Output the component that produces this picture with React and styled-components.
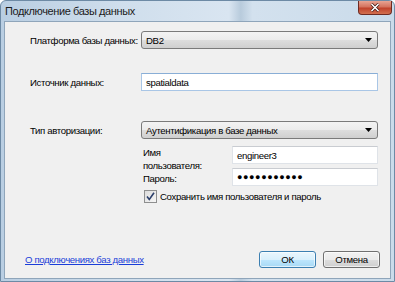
import React from 'react'
import styled, { createGlobalStyle } from 'styled-components'

const Global = createGlobalStyle`
  html, body { margin: 0; padding: 0; }
  body {
    width: 395px;
    height: 282px;
    overflow: hidden;
    font-family: "Liberation Sans", Arial, sans-serif;
    font-size: 9.6px;
    letter-spacing: -0.35px;
    color: #000;
  }
`

const Frame = styled.div`
  width: 395px;
  height: 282px;
  box-sizing: border-box;
  display: flex;
  flex-direction: column;
  background: linear-gradient(90deg, #b9cee2 0%, #cfdeec 30%, #d9e5f1 58%, #b8cbdc 61%, #d3e1ee 64%, #cadbea 100%);
  border: 1px solid #6d8aa5;
  border-radius: 6px 6px 0 0;
`

const TitleBar = styled.div`
  height: 20px;
  display: flex;
  align-items: flex-start;
  justify-content: space-between;
  padding-left: 4px;
`

const Title = styled.div`
  padding-top: 4px;
  font-size: 11px;
  letter-spacing: -0.4px;
  color: #1b1b1b;
`

const CloseButton = styled.div`
  width: 34px;
  height: 14px;
  margin-right: 2px;
  box-sizing: border-box;
  border: 1px solid #6e2b22;
  border-top: none;
  border-radius: 0 0 4px 4px;
  background: linear-gradient(180deg, #e8a493 0%, #d4735e 45%, #c0432c 55%, #d2704f 100%);
  display: flex;
  align-items: center;
  justify-content: center;
`

const Panel = styled.div`
  flex: 1;
  margin: 0 3px 2px 3px;
  background: #f0f0f0;
  border: 1px solid #8fa5ba;
  display: flex;
  flex-direction: column;
  padding: 9px 12px 10px 20px;
`

const Row = styled.div`
  display: flex;
  align-items: center;
  height: 18px;
  padding-left: 5px;
  margin-top: ${p => p.gap || 0}px;
`

const Label = styled.div`
  width: 111px;
  flex-shrink: 0;
  white-space: nowrap;
`

const Combo = styled.div`
  flex: 1;
  height: 18px;
  box-sizing: border-box;
  border: 1px solid #7a7a7a;
  border-radius: 3px;
  background: linear-gradient(180deg, #f3f3f3 0%, #ebebeb 50%, #dddddd 51%, #cfcfcf 100%);
  display: flex;
  align-items: center;
  justify-content: space-between;
  padding: 0 5px 0 4px;
`

const TextBox = styled.div`
  flex: 1;
  height: 18px;
  box-sizing: border-box;
  background: #fff;
  border: 1px solid ${p => p.focus ? '#a9c6e6' : '#dfe3e8'};
  border-top-color: ${p => p.focus ? '#89aed6' : '#c9ccd1'};
  display: flex;
  align-items: center;
  padding-left: 4px;
`

const Dots = styled.span`
  font-size: 9px;
  letter-spacing: 0.6px;
`

const Sub = styled.div`
  margin-left: 118px;
  margin-top: 7px;
  display: grid;
  grid-template-columns: 89px 1fr;
  grid-auto-rows: 18px;
  row-gap: 4px;
`

const SubLabel = styled.div`
  line-height: 13px;
  padding-top: ${p => p.shift || 0}px;
  white-space: nowrap;
`

const Check = styled.label`
  grid-column: 1 / 3;
  display: flex;
  align-items: center;
  gap: 3px;
  margin-left: 1px;
  margin-top: -5px;
`

const Box = styled.span`
  width: 13px;
  height: 13px;
  box-sizing: border-box;
  border: 1px solid #8e8f8f;
  background: linear-gradient(135deg, #dcdcdc 0%, #f6f6f6 100%);
  display: flex;
  align-items: center;
  justify-content: center;
`

const Footer = styled.div`
  margin-top: auto;
  margin-right: -2px;
  display: flex;
  align-items: center;
  gap: 7px;
`

const Link = styled.a`
  color: #1a3ed9;
  text-decoration: underline;
  margin-right: auto;
`

const Button = styled.div`
  width: 57px;
  height: 17px;
  box-sizing: border-box;
  border-radius: 3px;
  display: flex;
  align-items: center;
  justify-content: center;
  border: 1px solid ${p => p.primary ? '#3c7fb1' : '#707070'};
  background: ${p => p.primary
    ? 'linear-gradient(180deg, #eaf6fd 0%, #d9f0fc 50%, #bee6fd 51%, #a7d9f5 100%)'
    : 'linear-gradient(180deg, #f2f2f2 0%, #ebebeb 50%, #dddddd 51%, #cfcfcf 100%)'};
  box-shadow: inset 0 0 0 1px rgba(255,255,255,0.65);
`

const Arrow = () => (
  <svg width="7" height="4" viewBox="0 0 7 4">
    <path d="M0 0h7L3.5 4z" fill="#000" />
  </svg>
)

export default function App () {
  return (
    <>
      <Global />
      <Frame>
        <TitleBar>
          <Title>Подключение базы данных</Title>
          <CloseButton>
            <svg width="10" height="9" viewBox="0 0 10 9">
              <path d="M1.5 1l7 7M8.5 1l-7 7" stroke="#3d1410" strokeWidth="3" />
              <path d="M1.5 1l7 7M8.5 1l-7 7" stroke="#fff" strokeWidth="1.6" />
            </svg>
          </CloseButton>
        </TitleBar>
        <Panel>
          <Row>
            <Label>Платформа базы данных:</Label>
            <Combo><span>DB2</span><Arrow /></Combo>
          </Row>
          <Row gap={24}>
            <Label>Источник данных:</Label>
            <TextBox focus>spatialdata</TextBox>
          </Row>
          <Row gap={30}>
            <Label>Тип авторизации:</Label>
            <Combo><span>Аутентификация в базе данных</span><Arrow /></Combo>
          </Row>
          <Sub>
            <SubLabel>Имя<br />пользователя:</SubLabel>
            <TextBox>engineer3</TextBox>
            <SubLabel shift={4}>Пароль:</SubLabel>
            <TextBox><Dots>●●●●●●●●●●●</Dots></TextBox>
            <Check>
              <Box>
                <svg width="9" height="9" viewBox="0 0 9 9">
                  <path d="M1 4.5l2.3 3L8 0.8" stroke="#2b3f6b" strokeWidth="1.6" fill="none" />
                </svg>
              </Box>
              Сохранить имя пользователя и пароль
            </Check>
          </Sub>
          <Footer>
            <Link href="#">О подключениях баз данных</Link>
            <Button primary>ОК</Button>
            <Button>Отмена</Button>
          </Footer>
        </Panel>
      </Frame>
    </>
  )
}
